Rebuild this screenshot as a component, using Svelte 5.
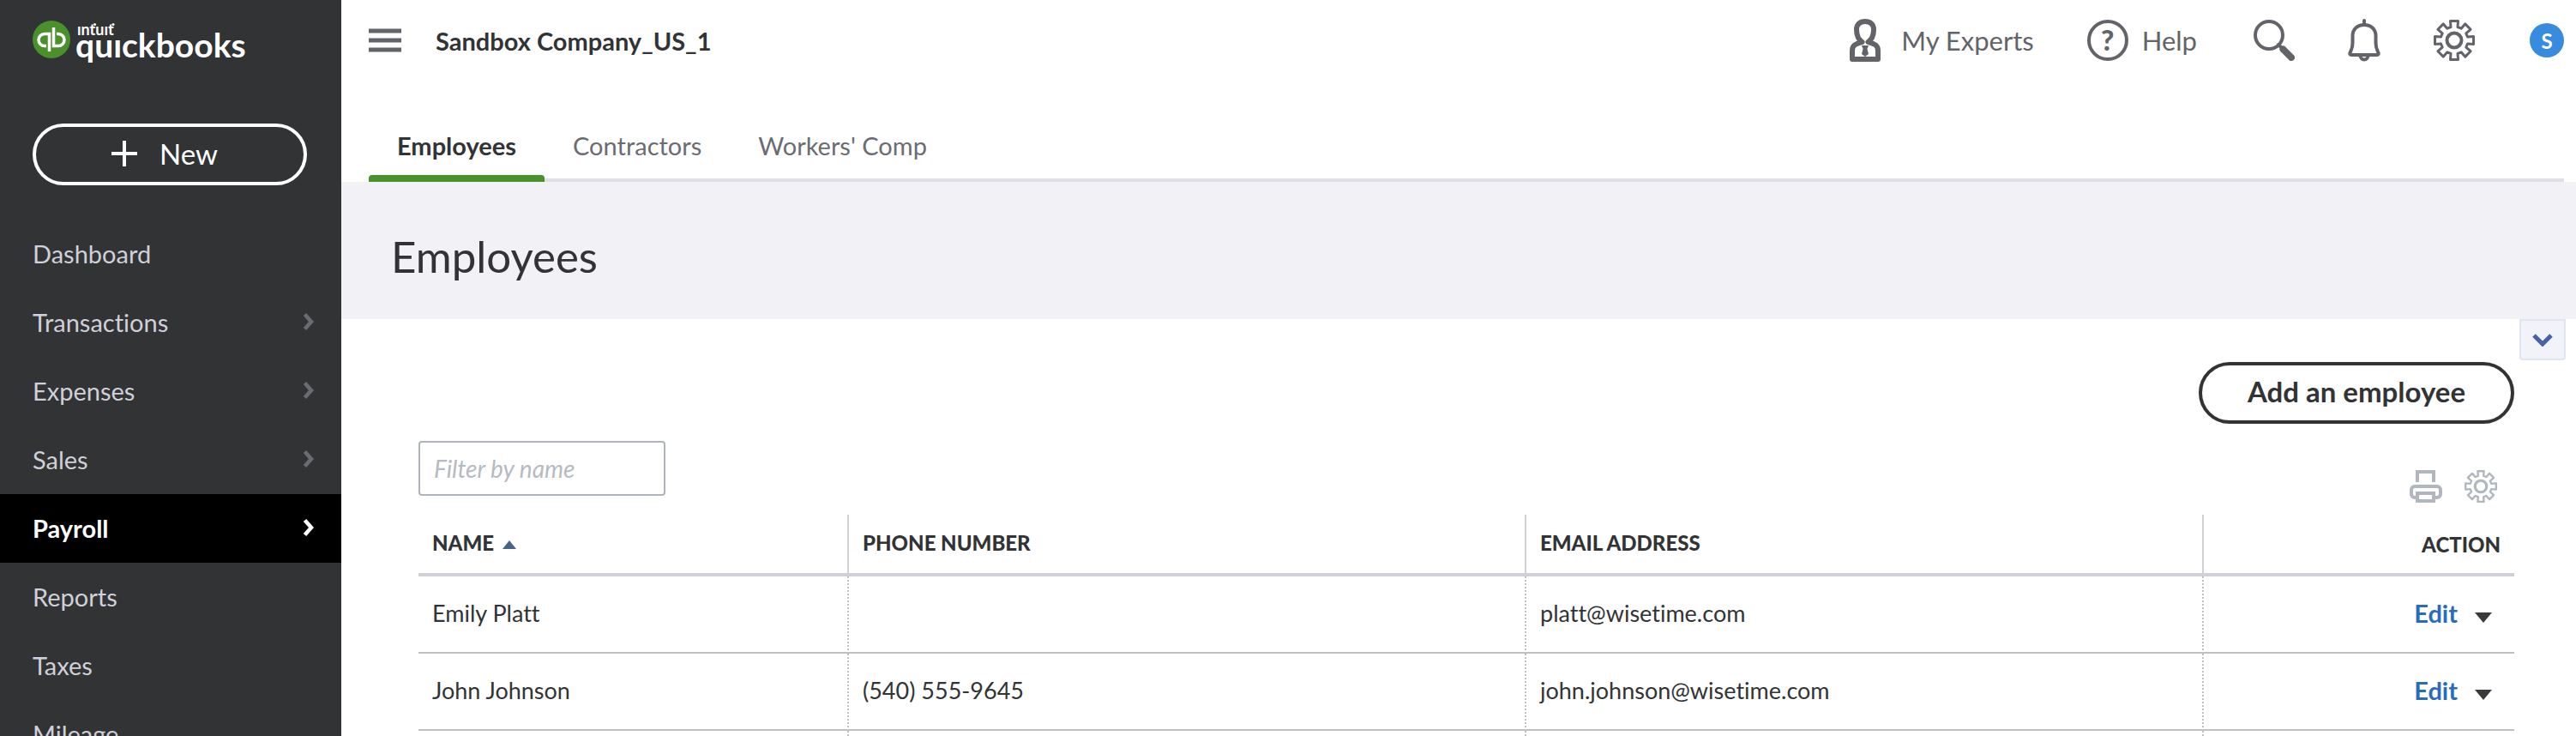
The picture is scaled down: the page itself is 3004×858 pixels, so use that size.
<script>
  const nav = [
    { label: 'Dashboard' },
    { label: 'Transactions', sub: true },
    { label: 'Expenses', sub: true },
    { label: 'Sales', sub: true },
    { label: 'Payroll', sub: true, active: true },
    { label: 'Reports' },
    { label: 'Taxes' },
    { label: 'Mileage' }
  ];

  const tabs = ['Employees', 'Contractors', "Workers' Comp"];
  let activeTab = $state('Employees');
  let filter = $state('');

  const employees = [
    { name: 'Emily Platt', phone: '', email: 'platt@wisetime.com' },
    { name: 'John Johnson', phone: '(540) 555-9645', email: 'john.johnson@wisetime.com' }
  ];

  const shown = $derived(
    employees.filter((e) => e.name.toLowerCase().includes(filter.toLowerCase()))
  );

  // Outline of an eight-toothed gear centred on 24,24
  function gearPath() {
    const corners = [[15.5, -4], [22.5, -4.5], [22.5, 4.5], [15.5, 4]];
    const pts = [];
    for (let i = 0; i < 8; i++) {
      const a = (i * Math.PI) / 4;
      for (const [r, w] of corners) {
        const x = 24 + r * Math.cos(a) - w * Math.sin(a);
        const y = 24 + r * Math.sin(a) + w * Math.cos(a);
        pts.push(`${x.toFixed(2)} ${y.toFixed(2)}`);
      }
    }
    return `M${pts.join('L')}Z`;
  }
  const gear = gearPath();
</script>

{#snippet gearIcon()}
  <svg class="gear" viewBox="0 0 48 48" aria-hidden="true">
    <path d={gear} stroke-width="3"/>
    <circle cx="24" cy="24" r="8.5" stroke-width="4"/>
  </svg>
{/snippet}

<div class="shell">
  <aside class="sidebar">
    <a class="logo" href="#home" aria-label="Intuit QuickBooks">
      <svg class="mark" viewBox="0 0 44 44" aria-hidden="true">
        <circle cx="22" cy="22" r="22"/>
        <path d="M16 29.5H14a7 7 0 0 1 0-14h5.5V36M28 15.5h2a7 7 0 0 1 0 14h-5.5V8"/>
      </svg>
      <span class="wordmark">
        <span class="brand-top">ınṫuıṫ</span>
        <span class="brand">quıckbooks</span>
      </span>
    </a>

    <button class="new">
      <svg class="plus" viewBox="0 0 30 30" aria-hidden="true"><path d="M15 0V30M0 15H30"/></svg>
      New
    </button>

    <nav class="menu">
      {#each nav as item}
        <a class="menu-item" class:active={item.active} href="#{item.label.toLowerCase()}">
          {item.label}
          {#if item.sub}
            <svg class="arrow" viewBox="0 0 12 20" aria-hidden="true"><path d="M1.5 1.5L9 10L1.500 18.500"/></svg>
          {/if}
        </a>
      {/each}
    </nav>
  </aside>

  <div class="page">
    <header class="topbar">
      <button class="icon-btn" aria-label="Collapse menu">
        <svg class="burger" viewBox="0 0 38 28" aria-hidden="true"><path d="M0 3H38M0 14H38M0 25H38"/></svg>
      </button>
      <span class="company">Sandbox Company_US_1</span>

      <div class="tools">
        <button class="icon-btn experts">
          <svg class="person" viewBox="0 0 36 50" aria-hidden="true">
            <path d="M14.500 27C10 24 8 18 8 12.500C8 6.500 12 3 18 3S28 6.500 28 12.500C28 18 26 24 21.500 27C28 29 33 30 33 37V47H3V37C3 30 8 29 14.500 27"/>
            <path class="tie" d="M14 31h8l-1.500 4L22 41l-4 3l-4-3l1.500-6z"/>
          </svg>
          My Experts
        </button>
        <button class="icon-btn help"><span class="question" aria-hidden="true">?</span>Help</button>
        <button class="icon-btn" aria-label="Search">
          <svg class="search" viewBox="0 0 48 48" aria-hidden="true">
            <circle cx="18" cy="18" r="16" stroke-width="4"/>
            <path d="M29 29L35 35" stroke-width="4"/>
            <path d="M34.500 34.500L44 44" stroke-width="8"/>
          </svg>
        </button>
        <button class="icon-btn" aria-label="Notifications">
          <svg class="bell" viewBox="0 0 38 50" aria-hidden="true">
            <path d="M19 2V6"/>
            <path d="M19 7C11 7 5.500 12 5.500 20V28C5.500 34 4 36 2.500 39.500C2 41 2.500 42 4 42H34C35.500 42 36 41 35.500 39.500C34 36 32.500 34 32.500 28V20C32.500 12 27 7 19 7Z"/>
            <path d="M14.500 43a4.500 4.500 0 0 0 9 0"/>
          </svg>
        </button>
        <button class="icon-btn" aria-label="Settings">{@render gearIcon()}</button>
        <button class="avatar">S</button>
      </div>
    </header>

    <nav class="tabs">
      {#each tabs as tab}
        <button class="tab" class:active={activeTab === tab} onclick={() => (activeTab = tab)}>{tab}</button>
      {/each}
    </nav>

    <div class="banner"><h1>Employees</h1></div>

    <main class="content">
      <button class="toggle" aria-label="Expand">
        <svg viewBox="0 0 24 15" aria-hidden="true"><path d="M2 2L12 12L22 2"/></svg>
      </button>

      <div class="actions"><button class="add">Add an employee</button></div>

      <div class="table-bar">
        <input type="text" placeholder="Filter by name" aria-label="Filter by name" bind:value={filter}/>
        <div class="table-tools">
          <button class="icon-btn" aria-label="Print">
            <svg class="printer" viewBox="0 0 38 38" aria-hidden="true">
              <path d="M9 14V2H28V14"/>
              <path d="M8 32H6a4 4 0 0 1-4-4V23a4 4 0 0 1 4-4H32a4 4 0 0 1 4 4V28a4 4 0 0 1-4 4H30"/>
              <path d="M9 27H28V36H9Z"/>
            </svg>
          </button>
          <button class="icon-btn" aria-label="Table settings">{@render gearIcon()}</button>
        </div>
      </div>

      <table>
        <colgroup>
          <col class="col-name"/>
          <col/>
          <col/>
          <col class="col-action"/>
        </colgroup>
        <thead>
          <tr>
            <th aria-sort="ascending">
              NAME
              <svg class="sort" viewBox="0 0 16 10" aria-hidden="true"><path d="M8 0L16 10H0Z"/></svg>
            </th>
            <th>PHONE NUMBER</th>
            <th>EMAIL ADDRESS</th>
            <th class="action">ACTION</th>
          </tr>
        </thead>
        <tbody>
          {#each shown as e}
            <tr>
              <td>{e.name}</td>
              <td>{e.phone}</td>
              <td>{e.email}</td>
              <td class="action">
                <div class="edit">
                  <a href="#edit">Edit</a>
                  <button class="icon-btn" aria-label="More actions">
                    <svg class="caret" viewBox="0 0 20 12" aria-hidden="true"><path d="M0 0H20L10 12Z"/></svg>
                  </button>
                </div>
              </td>
            </tr>
          {/each}
          <tr><td></td><td></td><td></td><td></td></tr>
        </tbody>
      </table>
    </main>
  </div>
</div>

<style>
  :global(body) {
    margin: 0;
    background: #fff;
  }

  .shell {
    display: flex;
    height: 100vh;
    overflow: hidden;
    font-family: Lato, sans-serif;
    font-size: 29px;
    font-variant-ligatures: none;
    color: #323335;
  }

  button {
    font: inherit;
    font-variant-ligatures: none;
    color: inherit;
    cursor: pointer;
  }
  a { text-decoration: none; }
  svg {
    display: block;
    flex: none;
    fill: none;
    stroke: currentColor;
  }

  /* Sidebar */
  .sidebar {
    flex: none;
    box-sizing: border-box;
    width: 398px;
    padding-top: 24px;
    background: #323335;
    color: #d0d0d8;
  }
  .logo {
    display: flex;
    gap: 6px;
    height: 56px;
    padding-left: 38px;
    color: #fff;
  }
  .mark {
    width: 44px;
    height: 44px;
    stroke: #fff;
    stroke-width: 3.5;
  }
  .mark circle { fill: #4a912c; stroke: none; }
  .wordmark {
    display: flex;
    flex-direction: column;
    font-weight: 700;
  }
  .brand-top {
    height: 8px;
    padding-left: 2px;
    font-size: 18px;
    line-height: 20px;
  }
  .brand {
    font-size: 39px;
    line-height: 40px;
  }
  .new {
    display: flex;
    align-items: center;
    justify-content: center;
    gap: 26px;
    box-sizing: border-box;
    width: 320px;
    height: 72px;
    padding: 0 12px 2px 0;
    margin: 64px 40px 40px 38px;
    border: 4px solid #fff;
    border-radius: 36px;
    background: none;
    font-size: 33px;
    color: #fff;
  }
  .plus {
    width: 30px;
    height: 30px;
    stroke-width: 4;
  }
  .menu-item {
    display: flex;
    align-items: center;
    justify-content: space-between;
    box-sizing: border-box;
    height: 80px;
    padding: 0 32px 2px 38px;
    color: inherit;
  }
  .menu-item.active {
    background: #000;
    font-weight: 700;
    color: #fff;
  }
  .arrow {
    width: 12px;
    height: 20px;
    stroke: #6b6c72;
    stroke-width: 4.5;
  }
  .active .arrow { stroke: #fff; }

  /* Top bar */
  .page {
    flex: 1;
    min-width: 0;
  }
  .topbar {
    display: flex;
    align-items: center;
    height: 94px;
    padding: 0 12px 0 32px;
  }
  .icon-btn {
    display: flex;
    align-items: center;
    padding: 0;
    border: 0;
    background: none;
    color: #63646a;
  }
  .burger {
    width: 38px;
    height: 28px;
    stroke-width: 5;
  }
  .company {
    padding-left: 40px;
    font-weight: 700;
  }
  .tools {
    display: flex;
    align-items: center;
    gap: 62px;
    margin-left: auto;
    font-size: 31px;
    stroke-linecap: round;
    stroke-linejoin: round;
  }
  .experts { gap: 24px; }
  .help {
    gap: 16px;
    padding-right: 4px;
  }
  .person {
    width: 36px;
    height: 50px;
    stroke-width: 6;
  }
  .tie { fill: currentColor; stroke: none; }
  .question {
    box-sizing: border-box;
    width: 48px;
    height: 48px;
    border: 4px solid;
    border-radius: 50%;
    font-size: 33px;
    font-weight: 900;
    line-height: 38px;
    text-align: center;
  }
  .search, .gear {
    width: 48px;
    height: 48px;
  }
  .gear { stroke-linejoin: round; }
  .bell {
    width: 38px;
    height: 50px;
    stroke-width: 4;
  }
  .avatar {
    width: 40px;
    height: 40px;
    margin: 0 2px;
    padding: 0;
    border: 0;
    border-radius: 50%;
    background: #388cdf;
    font-size: 24px;
    font-weight: 700;
    color: #fff;
  }

  /* Tabs */
  .tabs {
    display: flex;
    height: 118px;
    margin: 0 14px 0 32px;
    box-shadow: inset 0 -4px #dfe0e5;
  }
  .tab {
    position: relative;
    padding: 32px 33px 0;
    border: 0;
    background: none;
    color: #6b6c72;
  }
  .tab.active {
    font-weight: 700;
    color: #323335;
  }
  .tab.active::after {
    content: '';
    position: absolute;
    inset: auto 0 0;
    height: 8px;
    border-radius: 4px 4px 0 0;
    background: #4a912c;
  }

  .banner {
    display: flex;
    align-items: center;
    height: 160px;
    padding: 0 58px;
    background: #f2f1f6;
  }
  h1 {
    padding-top: 12px;
    margin: 0;
    font-size: 51px;
    font-weight: 400;
  }

  /* Employee list */
  .content {
    position: relative;
    padding: 50px 72px 0 90px;
  }
  .toggle {
    position: absolute;
    top: 0;
    right: 12px;
    display: grid;
    place-items: center;
    box-sizing: border-box;
    width: 54px;
    height: 48px;
    padding: 0;
    border: 2px solid #dfe6f0;
    border-radius: 0 0 4px 4px;
    background: #f1f3f8;
    color: #4862a8;
  }
  .toggle svg {
    width: 24px;
    height: 15px;
    stroke-width: 5;
  }
  .actions {
    display: flex;
    justify-content: flex-end;
  }
  .add {
    width: 368px;
    height: 72px;
    padding: 0 0 4px;
    border: 4px solid #323335;
    border-radius: 36px;
    background: #fff;
    font-size: 33px;
    font-weight: 700;
  }
  .table-bar {
    display: flex;
    justify-content: space-between;
    height: 86px;
    padding-top: 20px;
  }
  input {
    box-sizing: border-box;
    width: 288px;
    height: 64px;
    padding: 0 16px;
    border: 2px solid #afb3bc;
    border-radius: 4px;
    font: inherit;
    font-size: 28px;
  }
  input::placeholder {
    color: #b6bac2;
    font-style: italic;
    opacity: 1;
  }
  .table-tools {
    display: flex;
    align-items: flex-start;
    gap: 26px;
    padding: 34px 20px 0 0;
  }
  .table-tools .icon-btn { color: #b2b7bf; }
  .table-tools svg {
    width: 38px;
    height: 38px;
  }
  .printer { stroke-width: 4; }

  table {
    width: 100%;
    table-layout: fixed;
    border-collapse: separate;
    border-spacing: 0;
  }
  .col-name { width: 502px; }
  .col-action { width: 362px; }
  th, td {
    box-sizing: border-box;
    padding: 0 16px 4px;
    text-align: left;
  }
  th {
    height: 72px;
    border-right: 2px solid #d0d0d7;
    border-bottom: 4px solid #d0d0d7;
    font-size: 24px;
    font-weight: 900;
  }
  th.action { padding-bottom: 0; }
  td {
    height: 90px;
    border-right: 2px dotted #c0c0c0;
    border-bottom: 2px solid #c0c0c0;
    font-size: 27px;
  }
  th:last-child, td:last-child { border-right: 0; }
  .action { text-align: right; }
  .sort {
    display: inline-block;
    width: 16px;
    height: 10px;
    margin-left: 4px;
    vertical-align: middle;
    fill: #4b6485;
    stroke: none;
  }
  .edit {
    display: flex;
    align-items: baseline;
    justify-content: flex-end;
    gap: 20px;
    padding-right: 10px;
  }
  .edit a {
    font-size: 29px;
    font-weight: 700;
    color: #2a6cba;
  }
  .caret {
    width: 20px;
    height: 12px;
    fill: #393a3d;
    stroke: none;
  }
</style>
